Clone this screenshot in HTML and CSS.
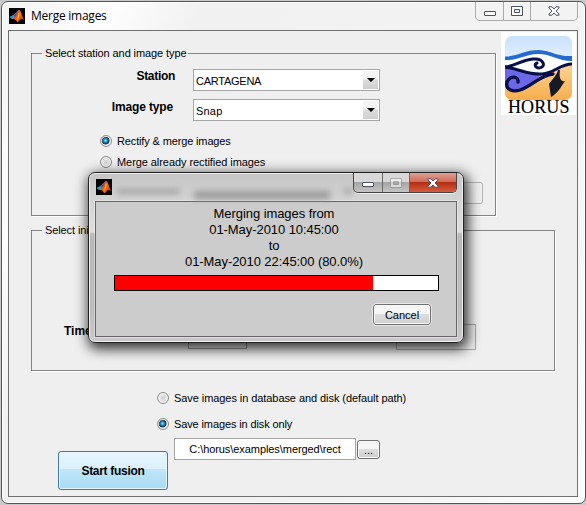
FILE: index.html
```
<!DOCTYPE html>
<html lang="en">
<head>
<meta charset="utf-8">
<title>Merge images</title>
<link rel="stylesheet" href="styles.css">
</head>
<body>
<svg class="defs" width="0" height="0" aria-hidden="true">
  <defs>
    <linearGradient id="flame" x1="0" y1="0" x2="1" y2="1"><stop offset="0" stop-color="#8c2414"/><stop offset=".5" stop-color="#f36a17"/><stop offset="1" stop-color="#b3300c"/></linearGradient>
    <linearGradient id="sky" x2="0" y2="1"><stop offset="0" stop-color="#c9e2fb"/><stop offset="1" stop-color="#e2f0ff"/></linearGradient>
    <linearGradient id="sand" x2="0" y2="1"><stop offset="0" stop-color="#ffd493"/><stop offset="1" stop-color="#f6ae4e"/></linearGradient>
    <symbol id="matlab" viewBox="0 0 16 16">
      <rect width="16" height="16" fill="#000"/>
      <path d="M.5 9 5 6.500l3-3 2-1.500-3 6-2 3-2 0z" fill="#3c91bd"/>
      <path d="M5 7 8 4l2-2-3 6-1 2z" fill="#5b4b6e"/>
      <path d="M4 11c2-1 3-4 4-6 1-2 2-4 3-3 1.500 2 2 7 4.500 10-2-1-3.500-1.500-4.500 0-1 1-2 2.500-3 2-1-2-2-3-4-3z" fill="url(#flame)"/>
      <path d="M10 3c1 3 .5 7-2 10 1-4 1-7 2-10z" fill="#ffb33a"/>
    </symbol>
    <symbol id="close" viewBox="0 0 12 10">
      <path d="M1 .8h3L6 3 8 .8h3V2L8 5l3 3v1.200H8L6 7 4 9.200H1V8l3-3-3-3z" fill="#fdfdfd" stroke="#4d5362"/>
    </symbol>
    <symbol id="maximize" viewBox="0 0 12 10">
      <path fill-rule="evenodd" d="M.5.500h11v9H.5zM3.500 3.500v3h5v-3z" fill="#fdfdfd" stroke="currentColor"/>
    </symbol>
  </defs>
</svg>
<main class="window">
  <header class="titlebar">
    <svg class="app-icon"><use href="#matlab"/></svg>
    <h1>Merge images</h1>
    <div class="controls">
      <span class="ctl min"><i></i></span><span class="ctl max"><svg><use href="#maximize"/></svg></span><span class="ctl close"><svg><use href="#close"/></svg></span>
    </div>
  </header>
  <section class="client">
    <div class="top">
      <fieldset class="station">
        <legend>Select station and image type</legend>
        <div class="field"><b>Station</b><div class="combo"><span class="name">CARTAGENA</span><i></i></div></div>
        <div class="field second"><b>Image type</b><div class="combo"><span class="kind">Snap</span><i></i></div></div>
        <div class="radio first"><i class="dot on"></i><span>Rectify &amp; merge images</span></div>
        <div class="radio next"><i class="dot"></i><span>Merge already rectified images</span></div>
        <div class="covered-button"></div>
      </fieldset>
      <div class="logo">
        <svg viewBox="0 0 67 64" width="67" height="64">
          <clipPath id="tile"><rect width="67" height="64" rx="7"/></clipPath>
          <g clip-path="url(#tile)">
            <rect width="67" height="64" fill="#fff"/>
            <path d="M0 0h67v24C54 18 40 13 30 14 18 16 12 21 0 21z" fill="url(#sky)"/>
            <path d="M0 20.500C13 20.500 19 14 34 14c13 1 20 7 33 6v5c-14 0-21-7-34-7-13 0-20 7-33 6z" fill="#246bd0"/>
            <path d="M0 32c13 2 23 6 36 7 12 0 20-8 31-11v36H0z" fill="url(#sand)"/>
            <path d="M0 31c12 2 24 8 37 8-8 4-12 13-20 16-7 2-13-1-17-6z" fill="#6c67e8"/>
            <g fill="none" stroke="#080e47" stroke-linecap="round">
              <path d="M0 31c10-1 17-7 28-8 12-1 13 9 6 9-4 0-5-4-2-5" stroke-width="3"/>
              <path d="M0 31c15 2 23 8 37 7 13-1 18-10 30-10" stroke-width="3"/>
              <path d="M13 46c1-6-8-7-11 0-2 8 6 10 13 8 14-5 20-15 33-16" stroke-width="3.300"/>
            </g>
            <path d="M53 34c-1 5-7 11-9 14l2 13c6-3 10-10 14-16-5 1-6-4-5-11z" fill="#171a24"/>
          </g>
        </svg>
        <strong>HORUS</strong>
      </div>
    </div>
    <fieldset class="interval">
      <legend>Select initial and final time</legend>
      <div class="time-row"><b>Time</b><div class="covered-combo"></div><div class="covered-box"></div></div>
    </fieldset>
    <div class="radio save"><i class="dot"></i><span>Save images in database and disk (default path)</span></div>
    <div class="radio save disk"><i class="dot on"></i><span>Save images in disk only</span></div>
    <div class="bottom">
      <button class="start">Start fusion</button>
      <div class="path"><span>C:\horus\examples\merged\rect</span></div>
      <button class="browse">...</button>
    </div>
  </section>
</main>
<section class="dialog">
  <header class="dialog-bar">
    <svg class="app-icon"><use href="#matlab"/></svg>
    <div class="haze"><i></i><i></i><i></i></div>
    <div class="controls">
      <span class="ctl min"><i></i></span><span class="ctl max"><svg><use href="#maximize"/></svg></span><span class="ctl close"><svg><use href="#close"/></svg></span>
    </div>
  </header>
  <div class="dialog-body">
    <p><span>Merging images from</span><span>01-May-2010 10:45:00</span><span>to</span><span>01-May-2010 22:45:00 (80.0%)</span></p>
    <div class="progress"><i style="width:80%"></i></div>
    <button class="cancel">Cancel</button>
  </div>
</section>
</body>
</html>
```

FILE: styles.css
```
* { box-sizing: border-box; }
body { margin: 0; width: 586px; height: 505px; overflow: hidden; background: #c9c9c9; font: 11px/14px "Liberation Sans", Arial, sans-serif; color: #000; }
.defs { position: absolute; }
span { white-space: nowrap; }
button { font: inherit; color: #000; padding: 0; }
.window { width: 585px; height: 503px; margin: 1px 0 0 1px; border: 1px solid #555; border-radius: 7px; padding: 0 7px 6px 6px; background: linear-gradient(115deg, #f4f4f4, #fdfdfd 14%, #f1f1f1 25%, #f3f3f3 70%, #fbfbfb); box-shadow: inset 0 0 0 1px #fff; }
.titlebar { display: flex; height: 28px; }
.app-icon { width: 16px; height: 16px; flex: none; }
.titlebar .app-icon { margin: 6px 6px 0 1px; }
h1 { font: 12px/16px "Open Sans", "Noto Sans", sans-serif; letter-spacing: -.25px; margin: 6px 0 0; }
.controls { display: flex; flex: none; margin-left: auto; }
.ctl { display: flex; align-items: center; justify-content: center; color: #4d5362; }
.ctl + .ctl { border-left: 1px solid #aaa; }
.ctl svg { width: 12px; height: 10px; }
.min i { width: 12px; height: 5px; border: 1px solid #4d5362; border-radius: 1px; background: #fff; }
.titlebar .controls { height: 19px; border: 1px solid #aaa; border-top: 0; border-radius: 0 0 5px 5px; }
.titlebar .min { width: 27px; padding-top: 4px; }
.titlebar .max { width: 27px; }
.titlebar .close { width: 47px; }
.client { height: 467px; border: 1px solid #707070; background: #efefef; }
.top { display: flex; height: 185px; }
fieldset { min-width: 0; border: 1px solid #858585; padding: 0; margin: 0 0 0 22px; box-shadow: 1px 1px 0 #fff; }
legend { height: 14px; padding: 0 0 0 3px; margin-left: 10px; width: 146px; white-space: nowrap; letter-spacing: -.1px; }
.station { width: 465px; height: 170px; margin-top: 15px; display: flow-root; }
.field { display: flex; height: 22px; margin-top: 9px; }
.field.second { margin-top: 8px; }
.field b { width: 143px; margin-right: 18px; text-align: right; font-size: 12px; line-height: 15px; letter-spacing: -.3px; }
.field.second b { width: 141px; margin-right: 20px; letter-spacing: -.15px; line-height: 16px; }
.combo { display: flex; width: 187px; height: 22px; border: 1px solid #a6a6a6; background: #fff; padding-left: 2px; line-height: 22px; }
.name { letter-spacing: -.25px; }
.kind { letter-spacing: .2px; }
.combo i { width: 15px; margin: 1px 1px 1px auto; background: linear-gradient(#f4f4f4 45%, #ddd 50%, #cfcfcf); display: flex; align-items: center; justify-content: center; }
.combo i::after { content: ""; border: 4px solid transparent; border-top-color: #000; border-bottom: 0; }
.radio { display: flex; align-items: center; height: 14px; letter-spacing: -.07px; }
.dot { width: 12px; height: 12px; flex: none; border: 1px solid #8c8c8c; border-radius: 50%; margin-right: 5px; background: radial-gradient(#d2d2d2, #f2f2f2 75%); box-shadow: inset 0 0 0 1px #f5f5f5; }
.dot.on { background: radial-gradient(circle at 45% 45%, #8ce0f8 0, #1c86ba 26%, #10283d 46%, #e2e2e2 56%); }
.first { margin: 13px 0 0 68px; letter-spacing: -.14px; }
.next { margin: 7px 0 0 68px; }
.covered-button { margin: 13px 0 0 351px; width: 100px; height: 22px; border: 1px solid #b5b5b5; border-radius: 3px; background: #f1f1f1; }
.logo { width: 75px; height: 83px; margin: 1px 0 0 5px; padding: 4px; background: #fff; display: flex; flex-direction: column; }
.logo svg { flex: none; }
.logo strong { font: 18px/14px "Liberation Serif", serif; margin: 0 0 0 3px; letter-spacing: .1px; -webkit-text-stroke: .15px #000; }
.interval { width: 524px; height: 148px; margin-top: 7px; }
.time-row { display: flex; margin-top: 87px; height: 28px; }
.time-row b { width: 124px; padding: 0 0 0 32px; font-size: 12px; white-space: nowrap; }
.covered-combo { margin: 0 0 0 32px; width: 59px; height: 22px; border: 1px solid #999; background: #eee; align-self: center; }
.covered-box { margin-left: 149px; width: 80px; height: 26px; border: 1px solid #aaa; }
.save { margin: 20px 0 0 148px; }
.disk { margin-top: 12px; letter-spacing: -.12px; }
.bottom { display: flex; margin-left: 49px; height: 60px; }
.start { width: 110px; height: 39px; margin-top: 20px; border: 1px solid #3b7da5; border-radius: 3px; background: linear-gradient(#e9f6fd, #daf0fb 46%, #bfe5f9 47%, #a8dbf4); box-shadow: inset 0 0 0 1px #e6f7ff; font: bold 12px/15px "Liberation Sans", sans-serif; letter-spacing: -.3px; padding-top: 2px; }
.path { margin: 7px 0 0 6px; width: 182px; height: 22px; border: 1px solid #a6a6a6; background: #fff; text-align: center; line-height: 21px; letter-spacing: -.07px; }
.browse, .cancel { border: 1px solid #707070; border-radius: 3px; background: linear-gradient(#f5f5f5 45%, #dedede 50%, #cfcfcf); box-shadow: inset 0 0 0 1px #f8f8f8; }
.browse { width: 23px; height: 19px; margin: 9px 0 0 1px; }
.dialog { position: absolute; left: 88px; top: 172px; width: 376px; height: 171px; border: 1px solid #222; border-radius: 7px; padding: 0 6px 6px; background: linear-gradient(#c5c5c5, #d3d3d3 15%, #dedede 35%, #b9b9b9 36%, #bcbcbc 80%, #cbc9cd); box-shadow: inset 0 0 0 1px #eee, 2px 4px 13px 2px rgba(0,0,0,.8); }
.dialog-bar { display: flex; height: 28px; }
.dialog-bar .app-icon { margin: 6px 0 0 1px; }
.haze { flex: none; width: 240px; display: flex; align-items: center; gap: 14px; padding: 8px 0 0 5px; filter: blur(3px); }
.haze i { height: 5px; width: 64px; background: #a0a0a0; }
.haze i:nth-child(2) { width: 138px; height: 8px; margin-top: 7px; background: #999; }
.haze i:nth-child(3) { width: 8px; }
.dialog .controls { height: 20px; border: 1px solid #444; border-top: 0; border-radius: 0 0 5px 5px; background: linear-gradient(#d8d8d8 45%, #a6a6a6 50%, #c4c4c4); box-shadow: 0 1px 0 #eee; overflow: hidden; }
.dialog .ctl + .ctl { border-color: #666; }
.dialog .min { width: 28px; padding-top: 4px; }
.dialog .max { width: 27px; color: #8b8b8b; }
.dialog .max svg { opacity: .55; }
.dialog .close { width: 47px; background: linear-gradient(#dda094, #d16c59 45%, #b62d15 50%, #d65d3e); }
.dialog-body { width: 362px; height: 136px; border: 1px solid #666; background: #ccc; box-shadow: 0 0 0 1px rgba(255,255,255,.35); display: flex; flex-direction: column; }
.dialog-body p { margin: 4px 0 0; display: flex; flex-direction: column; align-items: center; font-size: 13px; line-height: 16px; letter-spacing: -.07px; padding-right: 4px; }
.progress { margin: 5px 0 0 18px; width: 325px; height: 16px; border: 1px solid #000; background: #fff; }
.progress i { display: block; height: 100%; background: red; }
.cancel { width: 58px; height: 21px; margin: 13px 0 0 277px; outline: 1px solid #e6e6e6; }
```
